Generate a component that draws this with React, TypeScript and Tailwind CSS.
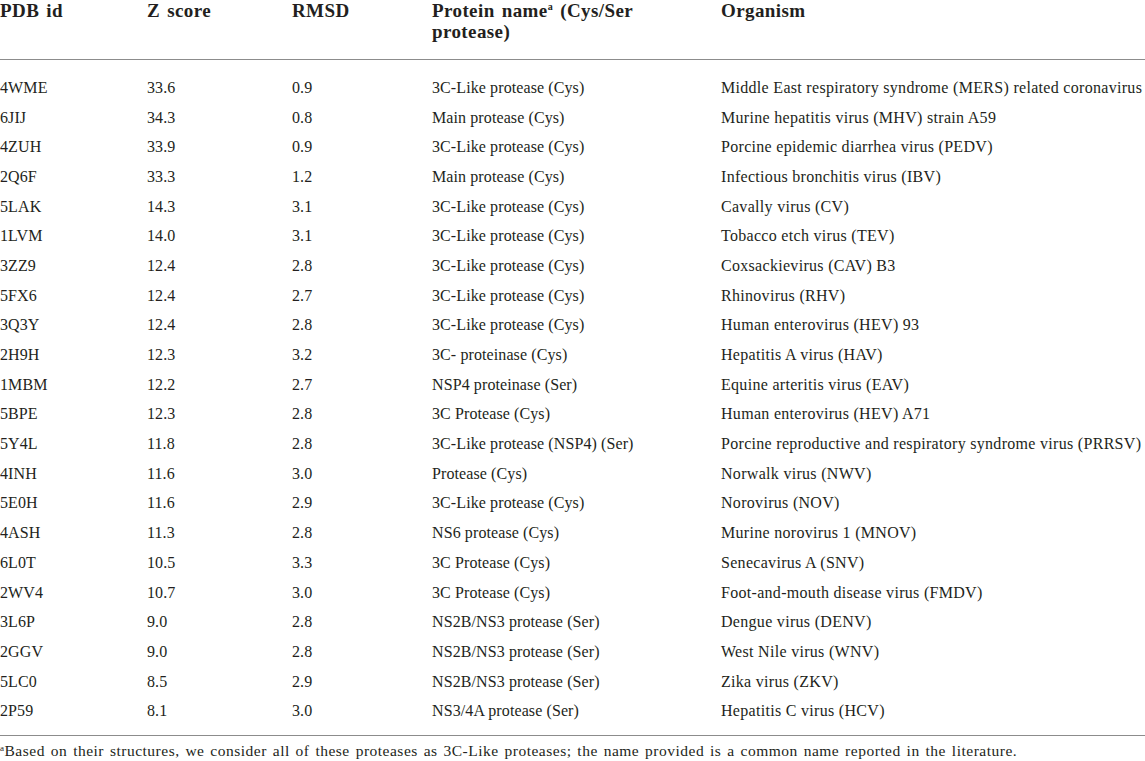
import React from 'react';

const rows: [string, string, string, string, string][] = [
  ['4WME', '33.6', '0.9', '3C-Like protease (Cys)', 'Middle East respiratory syndrome (MERS) related coronavirus'],
  ['6JIJ', '34.3', '0.8', 'Main protease (Cys)', 'Murine hepatitis virus (MHV) strain A59'],
  ['4ZUH', '33.9', '0.9', '3C-Like protease (Cys)', 'Porcine epidemic diarrhea virus (PEDV)'],
  ['2Q6F', '33.3', '1.2', 'Main protease (Cys)', 'Infectious bronchitis virus (IBV)'],
  ['5LAK', '14.3', '3.1', '3C-Like protease (Cys)', 'Cavally virus (CV)'],
  ['1LVM', '14.0', '3.1', '3C-Like protease (Cys)', 'Tobacco etch virus (TEV)'],
  ['3ZZ9', '12.4', '2.8', '3C-Like protease (Cys)', 'Coxsackievirus (CAV) B3'],
  ['5FX6', '12.4', '2.7', '3C-Like protease (Cys)', 'Rhinovirus (RHV)'],
  ['3Q3Y', '12.4', '2.8', '3C-Like protease (Cys)', 'Human enterovirus (HEV) 93'],
  ['2H9H', '12.3', '3.2', '3C- proteinase (Cys)', 'Hepatitis A virus (HAV)'],
  ['1MBM', '12.2', '2.7', 'NSP4 proteinase (Ser)', 'Equine arteritis virus (EAV)'],
  ['5BPE', '12.3', '2.8', '3C Protease (Cys)', 'Human enterovirus (HEV) A71'],
  ['5Y4L', '11.8', '2.8', '3C-Like protease (NSP4) (Ser)', 'Porcine reproductive and respiratory syndrome virus (PRRSV)'],
  ['4INH', '11.6', '3.0', 'Protease (Cys)', 'Norwalk virus (NWV)'],
  ['5E0H', '11.6', '2.9', '3C-Like protease (Cys)', 'Norovirus (NOV)'],
  ['4ASH', '11.3', '2.8', 'NS6 protease (Cys)', 'Murine norovirus 1 (MNOV)'],
  ['6L0T', '10.5', '3.3', '3C Protease (Cys)', 'Senecavirus A (SNV)'],
  ['2WV4', '10.7', '3.0', '3C Protease (Cys)', 'Foot-and-mouth disease virus (FMDV)'],
  ['3L6P', '9.0', '2.8', 'NS2B/NS3 protease (Ser)', 'Dengue virus (DENV)'],
  ['2GGV', '9.0', '2.8', 'NS2B/NS3 protease (Ser)', 'West Nile virus (WNV)'],
  ['5LC0', '8.5', '2.9', 'NS2B/NS3 protease (Ser)', 'Zika virus (ZKV)'],
  ['2P59', '8.1', '3.0', 'NS3/4A protease (Ser)', 'Hepatitis C virus (HCV)'],
];

// column starts: 0 / 147 / 292 / 432 / 721
const cols = 'grid grid-cols-[147px_145px_140px_289px_1fr]';

export default function App() {
  return (
    <div className="w-[1145px] h-[761px] bg-white text-[#231f20] font-['Liberation_Serif',serif] overflow-hidden">
      <div className={`${cols} h-[60px] border-b border-[#8c8c8c] text-[19px] leading-[21px] font-bold tracking-[0.4px] [word-spacing:2px]`}>
        <div>PDB id</div>
        <div>Z score</div>
        <div>RMSD</div>
        <div className="pr-2">
          Protein name<span className="align-top text-[10px] leading-[14px]">a</span> (Cys/Ser protease)
        </div>
        <div>Organism</div>
      </div>
      <div className="pt-[13px] pb-[9px] border-b border-[#8c8c8c]">
        {rows.map((r) => (
          <div key={r[0]} className={`${cols} h-[29.7px] items-center text-[16px] tracking-[0.1px] whitespace-nowrap`}>
            <div>{r[0]}</div>
            <div>{r[1]}</div>
            <div>{r[2]}</div>
            <div>{r[3]}</div>
            <div className="tracking-[0.3px]">{r[4]}</div>
          </div>
        ))}
      </div>
      <div className="pt-[6px] text-[15.5px] leading-[18px] tracking-[0.5px] [word-spacing:1.5px] whitespace-nowrap">
        <span className="align-top text-[9px] leading-[12px]">a</span>Based on their structures, we consider all of these proteases as 3C-Like proteases; the name provided is a common name reported in the literature.
      </div>
    </div>
  );
}
